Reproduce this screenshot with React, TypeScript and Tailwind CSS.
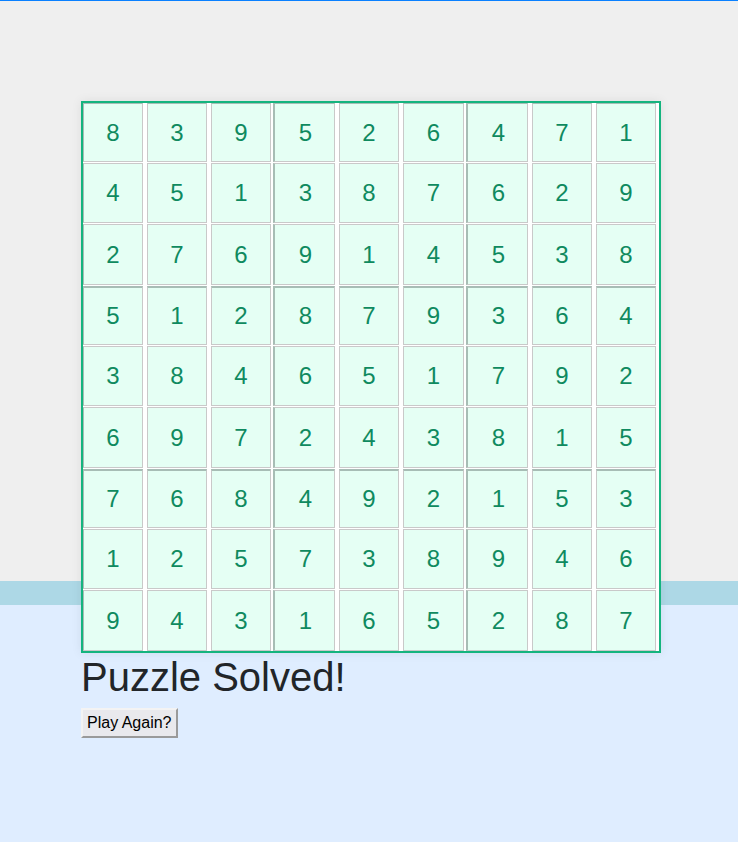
const BOARD = [
  [8, 3, 9, 5, 2, 6, 4, 7, 1],
  [4, 5, 1, 3, 8, 7, 6, 2, 9],
  [2, 7, 6, 9, 1, 4, 5, 3, 8],
  [5, 1, 2, 8, 7, 9, 3, 6, 4],
  [3, 8, 4, 6, 5, 1, 7, 9, 2],
  [6, 9, 7, 2, 4, 3, 8, 1, 5],
  [7, 6, 8, 4, 9, 2, 1, 5, 3],
  [1, 2, 5, 7, 3, 8, 9, 4, 6],
  [9, 4, 3, 1, 6, 5, 2, 8, 7],
];

// row heights follow the 3-row box pattern
const ROW_H = ["h-[59px]", "h-[60px]", "h-[61px]"];

const Cell = ({ value, row, col }: { value: number; row: number; col: number }) => {
  const boxLeft = col === 3 || col === 6;
  const boxTop = row === 3 || row === 6;
  return (
    <div
      className={[
        "flex items-center justify-center border border-[#c9c9c9] bg-[#e5fff4] text-[24px] text-[#0f8a5f]",
        ROW_H[row % 3],
        col === 0 ? "border-l-[#a7bdb5]" : "",
        row === 0 ? "border-t-[#a7bdb5]" : "",
        boxLeft ? "-ml-[2px] w-[62px] border-l-2 border-l-[#a7bdb5] pl-[2px]" : col === 5 ? "w-[61px]" : "w-[60px]",
        boxTop ? "border-t-2 border-t-[#a7bdb5]" : "",
      ].join(" ")}
    >
      {value}
    </div>
  );
};

export default function App() {
  return (
    <div className="min-h-screen border-t border-[#0a80ff] bg-[linear-gradient(to_bottom,#efefef_0,#efefef_580px,#add8e6_580px,#add8e6_604px,#dfedff_604px)] pl-[81px] pt-[100px] font-['Liberation_Sans',Arial,sans-serif]">
      <div className="inline-flex flex-col gap-[1px] border-2 border-[#14b47e] bg-white pr-[3px] shadow-[0_0_10px_rgba(0,0,0,0.08)]">
        {BOARD.map((row, r) => (
          <div key={r} className="flex gap-[4px]">
            {row.map((v, c) => (
              <Cell key={c} value={v} row={r} col={c} />
            ))}
          </div>
        ))}
      </div>

      <h2 className="mt-[1px] text-[40px] leading-[46px] text-[#212529]">Puzzle Solved!</h2>

      <button className="mt-[8px] flex h-[30px] items-center border-2 border-t-[#f3f3f3] border-l-[#f3f3f3] border-r-[#9a9a9a] border-b-[#9a9a9a] bg-[#e9e9ed] px-[4px] text-[16px] leading-[20px] text-black">
        Play Again?
      </button>
    </div>
  );
}
